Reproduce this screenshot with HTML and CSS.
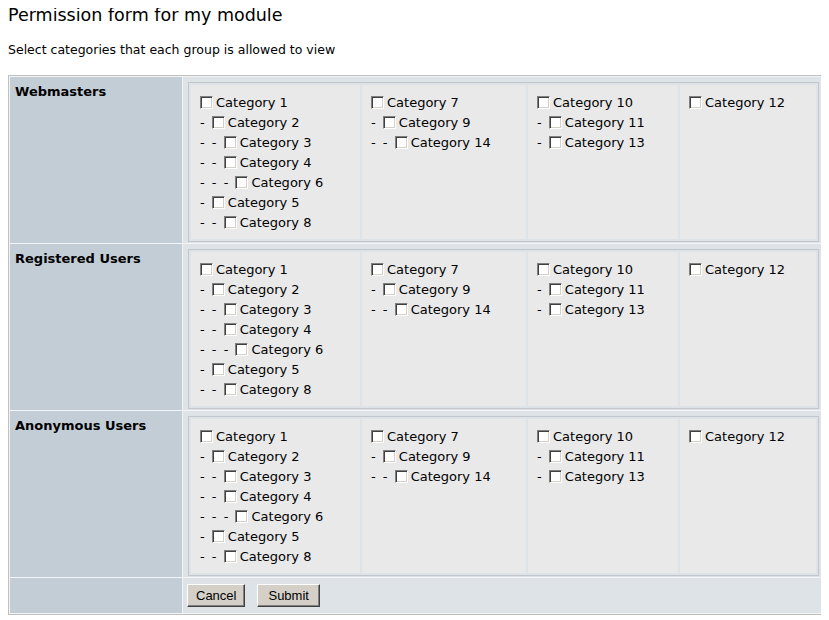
FILE: index.html
```html
<!DOCTYPE html><html lang="en">
<head>
    <meta charset="UTF-8">
    <title>Permission form for my module</title>
    <link rel="stylesheet" href="styles.css">
</head>
<body>
<h3 class="title">Permission form for my module</h3>
<p class="intro">Select categories that each group is allowed to view</p>

<form>
<table class="outer">
    <tr>
        <td class="head">Webmasters</td>
        <td class="even">
            <table class="cats">
                <tr>
                    <td class="col1">
                        <div class="cat"><input type="checkbox">Category 1</div>
                        <div class="cat"><span class="lvl">- </span><input type="checkbox">Category 2</div>
                        <div class="cat"><span class="lvl">- - </span><input type="checkbox">Category 3</div>
                        <div class="cat"><span class="lvl">- - </span><input type="checkbox">Category 4</div>
                        <div class="cat"><span class="lvl">- - - </span><input type="checkbox">Category 6</div>
                        <div class="cat"><span class="lvl">- </span><input type="checkbox">Category 5</div>
                        <div class="cat"><span class="lvl">- - </span><input type="checkbox">Category 8</div>
                    </td>
                    <td class="col2">
                        <div class="cat"><input type="checkbox">Category 7</div>
                        <div class="cat"><span class="lvl">- </span><input type="checkbox">Category 9</div>
                        <div class="cat"><span class="lvl">- - </span><input type="checkbox">Category 14</div>
                    </td>
                    <td class="col3">
                        <div class="cat"><input type="checkbox">Category 10</div>
                        <div class="cat"><span class="lvl">- </span><input type="checkbox">Category 11</div>
                        <div class="cat"><span class="lvl">- </span><input type="checkbox">Category 13</div>
                    </td>
                    <td class="col4">
                        <div class="cat"><input type="checkbox">Category 12</div>
                    </td>
                </tr>
            </table>
        </td>
    </tr>
    <tr>
        <td class="head">Registered Users</td>
        <td class="even">
            <table class="cats">
                <tr>
                    <td class="col1">
                        <div class="cat"><input type="checkbox">Category 1</div>
                        <div class="cat"><span class="lvl">- </span><input type="checkbox">Category 2</div>
                        <div class="cat"><span class="lvl">- - </span><input type="checkbox">Category 3</div>
                        <div class="cat"><span class="lvl">- - </span><input type="checkbox">Category 4</div>
                        <div class="cat"><span class="lvl">- - - </span><input type="checkbox">Category 6</div>
                        <div class="cat"><span class="lvl">- </span><input type="checkbox">Category 5</div>
                        <div class="cat"><span class="lvl">- - </span><input type="checkbox">Category 8</div>
                    </td>
                    <td class="col2">
                        <div class="cat"><input type="checkbox">Category 7</div>
                        <div class="cat"><span class="lvl">- </span><input type="checkbox">Category 9</div>
                        <div class="cat"><span class="lvl">- - </span><input type="checkbox">Category 14</div>
                    </td>
                    <td class="col3">
                        <div class="cat"><input type="checkbox">Category 10</div>
                        <div class="cat"><span class="lvl">- </span><input type="checkbox">Category 11</div>
                        <div class="cat"><span class="lvl">- </span><input type="checkbox">Category 13</div>
                    </td>
                    <td class="col4">
                        <div class="cat"><input type="checkbox">Category 12</div>
                    </td>
                </tr>
            </table>
        </td>
    </tr>
    <tr>
        <td class="head">Anonymous Users</td>
        <td class="even">
            <table class="cats">
                <tr>
                    <td class="col1">
                        <div class="cat"><input type="checkbox">Category 1</div>
                        <div class="cat"><span class="lvl">- </span><input type="checkbox">Category 2</div>
                        <div class="cat"><span class="lvl">- - </span><input type="checkbox">Category 3</div>
                        <div class="cat"><span class="lvl">- - </span><input type="checkbox">Category 4</div>
                        <div class="cat"><span class="lvl">- - - </span><input type="checkbox">Category 6</div>
                        <div class="cat"><span class="lvl">- </span><input type="checkbox">Category 5</div>
                        <div class="cat"><span class="lvl">- - </span><input type="checkbox">Category 8</div>
                    </td>
                    <td class="col2">
                        <div class="cat"><input type="checkbox">Category 7</div>
                        <div class="cat"><span class="lvl">- </span><input type="checkbox">Category 9</div>
                        <div class="cat"><span class="lvl">- - </span><input type="checkbox">Category 14</div>
                    </td>
                    <td class="col3">
                        <div class="cat"><input type="checkbox">Category 10</div>
                        <div class="cat"><span class="lvl">- </span><input type="checkbox">Category 11</div>
                        <div class="cat"><span class="lvl">- </span><input type="checkbox">Category 13</div>
                    </td>
                    <td class="col4">
                        <div class="cat"><input type="checkbox">Category 12</div>
                    </td>
                </tr>
            </table>
        </td>
    </tr>
    <tr>
        <td class="head foot"></td>
        <td class="even foot">
            <div class="buttons">
                <button type="button" class="btn">Cancel</button>
                <button type="submit" class="btn btn-submit">Submit</button>
            </div>
        </td>
    </tr>
</table>
</form>
</body>
</html>
```

FILE: styles.css
```css
body {
    margin: 8px;
    background: #fff;
    color: #000;
    font-family: "DejaVu Sans", Verdana, sans-serif;
    font-size: 13px;
}
.title {
    margin: -3px 0 0;
    font-size: 17.5px;
    font-weight: normal;
    line-height: 20px;
}
.intro {
    margin: 18px 0 18px;
    font-size: 12.5px;
    line-height: 14px;
}
form { margin: 0; }

/* outer permission table */
.outer {
    width: 817px;
    border: 1px solid #c0c0c0;
    border-spacing: 1px;
    background: #f2f4f6;
}
.outer td { vertical-align: top; }
.head {
    width: 162px;
    background: #c2cdd6;
    font-weight: bold;
    padding: 8px 5px 5px 5px;
    line-height: 14px;
}
.even {
    background: #dee3e7;
    padding: 5px 4px 1px 5px;
}
.foot { height: 35px; padding-top: 0; padding-bottom: 0; }
.even.foot { padding: 6px 4px 4px 4px; height: auto; }

/* category columns inside each group */
.cats {
    width: 100%;
    border: 1px solid #c3c7cb;
    border-spacing: 2px;
    background: #dee3e7;
}
.cats td {
    background: #e9e9e9;
    padding: 8px 4px 6px 9px;
    vertical-align: top;
}
.col1 { width: 156px; }
.col2 { width: 151px; }
.col3 { width: 137px; }

.cat {
    height: 20px;
    line-height: 20px;
    white-space: nowrap;
}
.lvl { word-spacing: 3px; }
.cat input {
    appearance: none;
    -webkit-appearance: none;
    width: 13px;
    height: 13px;
    margin: 0 3px 0 0;
    vertical-align: -2px;
    background: #fff;
    border: 1px solid;
    border-color: #808080 #fff #fff #808080;
    box-shadow: inset 1px 1px 0 #404040, inset -1px -1px 0 #d4d0c8;
}

.buttons {
    display: flex;
    gap: 12px;
}
.btn {
    font-family: "Liberation Sans", Arial, sans-serif;
    font-size: 13px;
    height: 23px;
    padding: 0 8px;
    background: #d4d0c8;
    color: #000;
    border: 1px solid;
    border-color: #fff #404040 #404040 #fff;
    box-shadow: inset -1px -1px 0 #808080, inset 1px 1px 0 #d4d0c8;
}
.btn-submit { padding: 0 10px; }
```
